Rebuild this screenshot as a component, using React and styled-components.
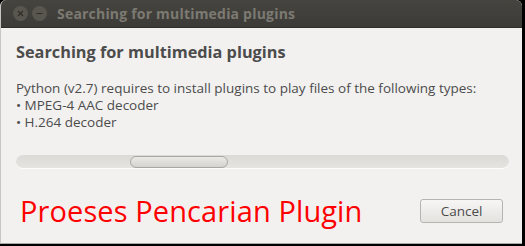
import React from 'react';
import styled, { createGlobalStyle } from 'styled-components';

const GlobalStyle = createGlobalStyle`
  html, body {
    margin: 0;
    padding: 0;
    background: #000;
  }
  body {
    font-family: "Open Sans", "Noto Sans", sans-serif;
  }
`;

const Screen = styled.div`
  width: 525px;
  height: 246px;
  background: #000;
  overflow: hidden;
`;

const Window = styled.div`
  width: 522px;
  height: 244px;
  display: flex;
  flex-direction: column;
  background: #f2f1f0;
  border-radius: 6px 6px 0 0;
  overflow: hidden;
  box-sizing: border-box;
  border-left: 1px solid #c8c6c2;
  border-bottom: 1px solid #a9a7a3;
`;

const TitleBar = styled.div`
  height: 28px;
  flex: none;
  display: flex;
  align-items: center;
  padding-left: 12px;
  gap: 4px;
  background: linear-gradient(#45443f, #3c3b37);
  border-bottom: 1px solid #2f2e2b;
  box-sizing: border-box;
`;

const WinButton = styled.div`
  width: 15px;
  height: 15px;
  border-radius: 50%;
  background: #58564f;
  display: flex;
  align-items: center;
  justify-content: center;
`;

const WinTitle = styled.div`
  margin-left: 6px;
  font-size: 14px;
  font-weight: 700;
  color: #7c7a72;
  letter-spacing: 0.2px;
`;

const Body = styled.div`
  flex: 1;
  display: flex;
  flex-direction: column;
  padding: 14px 13px 0 15px;
`;

const Heading = styled.div`
  font-size: 16.3px;
  font-weight: 700;
  color: #4c4c4c;
  line-height: 20px;
`;

const Message = styled.div`
  margin-top: 18px;
  font-size: 13.5px;
  color: #4c4c4c;
  line-height: 17px;
  white-space: nowrap;
`;

const Trough = styled.div`
  margin-top: 24px;
  height: 13px;
  border-radius: 7px;
  background: linear-gradient(#dcdad6, #e6e4e1);
  border-bottom: 1px solid #fdfdfc;
  display: flex;
  align-items: center;
  padding-left: 114px;
`;

const Thumb = styled.div`
  width: 96px;
  height: 10px;
  border-radius: 6px;
  border: 1px solid #a9a7a3;
  background: linear-gradient(#eceae7, #d5d3cf);
`;

const Footer = styled.div`
  margin-top: 30px;
  height: 24px;
  display: flex;
  align-items: center;
  justify-content: space-between;
`;

const Caption = styled.div`
  margin-left: 4px;
  font-family: "Open Sans", sans-serif;
  font-size: 29px;
  line-height: 24px;
  color: #ff0000;
  letter-spacing: 0.1px;
`;

const Button = styled.button`
  width: 83px;
  height: 24px;
  margin-right: 6px;
  border: 1px solid #b6b4b0;
  border-radius: 3px;
  background: linear-gradient(#f7f6f5, #e4e2df);
  font-family: "Open Sans", "Noto Sans", sans-serif;
  font-size: 13.5px;
  color: #4c4c4c;
  padding: 0;
`;

const Glyph = ({ minus }) => (
  <svg width="9" height="9" viewBox="0 0 9 9">
    {minus ? (
      <path d="M1.5 4.5h6" stroke="#2e2d29" strokeWidth="1.2" />
    ) : (
      <path d="M2 2l5 5M7 2l-5 5" stroke="#2e2d29" strokeWidth="1.2" />
    )}
  </svg>
);

export default function App() {
  return (
    <Screen>
      <GlobalStyle />
      <Window>
        <TitleBar>
          <WinButton><Glyph /></WinButton>
          <WinButton><Glyph minus /></WinButton>
          <WinTitle>Searching for multimedia plugins</WinTitle>
        </TitleBar>
        <Body>
          <Heading>Searching for multimedia plugins</Heading>
          <Message>
            Python (v2.7) requires to install plugins to play files of the following types:
            <br />• MPEG-4 AAC decoder
            <br />• H.264 decoder
          </Message>
          <Trough>
            <Thumb />
          </Trough>
          <Footer>
            <Caption>Proeses Pencarian Plugin</Caption>
            <Button>Cancel</Button>
          </Footer>
        </Body>
      </Window>
    </Screen>
  );
}
